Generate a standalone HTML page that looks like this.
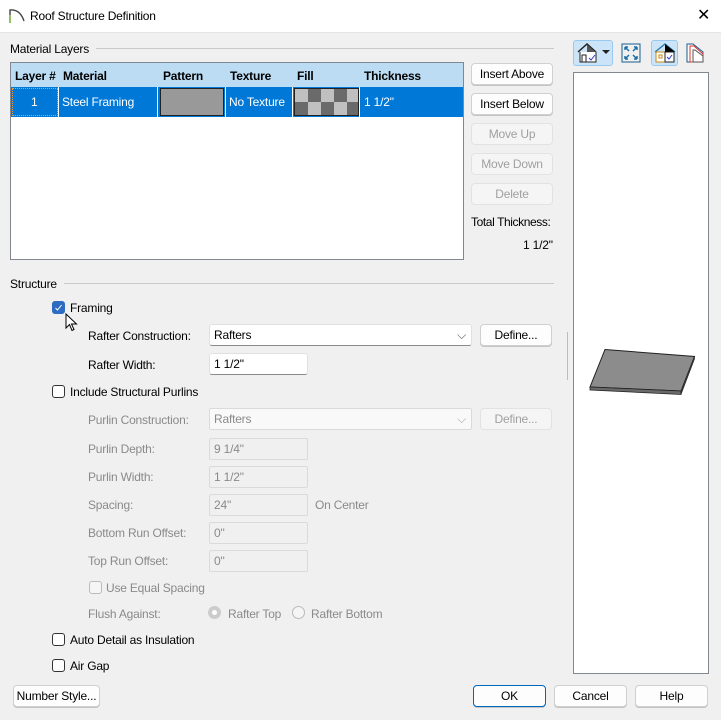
<!DOCTYPE html>
<html><head><meta charset="utf-8"><style>
*{box-sizing:border-box;margin:0;padding:0}
body{width:721px;height:720px;background:#f0f0f0;font-family:"Liberation Sans",sans-serif;font-size:12px;letter-spacing:-0.2px;color:#000;position:relative;overflow:hidden}
.a{position:absolute;white-space:nowrap}
.btn{position:absolute;background:#fdfdfd;border:1px solid #d0d0d0;border-radius:4px;text-align:center;line-height:20px;font-size:12px;box-shadow:0 1px 0 #c4c4c4}
.dis{background:#f5f5f5;color:#a0a0a0;box-shadow:none;border-color:#e2e2e2}
.inp{position:absolute;background:#fff;border:1px solid #e0e0e0;border-bottom:1px solid #8a8a8a;height:22px;line-height:20px;padding-left:4px;border-radius:3px}
.inpd{background:#f0f0f0;border:1px solid #dadada;color:#8a8a8a;border-radius:2px}
.cb{position:absolute;width:13px;height:13px;border:1px solid #333;border-radius:3px;background:#fff}
.g{color:#8a8a8a}
.hl{position:absolute;height:1px;background:#c8c8c8}
</style></head><body>
<div class="a" style="left:0;top:0;width:721px;height:32px;background:#fff"></div>
<svg class="a" style="left:8px;top:7px" width="18" height="18"><path d="M2 16V3 Q12 2 16 14" fill="none" stroke="#444" stroke-width="1.4"/><path d="M2 16V8" stroke="#8bc34a" stroke-width="1.5"/></svg>
<div class="a" style="left:30px;top:9px;font-size:12px">Roof Structure Definition</div>
<div class="a" style="left:697px;top:5px;font-size:16px">✕</div>
<div class="a" style="left:0;top:32px;width:721px;height:1px;background:#e5e5e5"></div>

<div class="a" style="left:10px;top:42px">Material Layers</div>
<div class="hl" style="left:96px;top:48px;width:458px"></div>
<div class="a" style="left:10px;top:62px;width:454px;height:198px;background:#fff;border:1px solid #828790"></div>
<div class="a" style="left:11px;top:63px;width:452px;height:24px;background:#bcdcf4"></div>
<div class="a" style="left:11px;top:87px;width:452px;height:30px;background:#0078d7"></div>
<div class="a" style="left:15px;top:69px;font-weight:bold">Layer #</div>
<div class="a" style="left:63px;top:69px;font-weight:bold">Material</div>
<div class="a" style="left:163px;top:69px;font-weight:bold">Pattern</div>
<div class="a" style="left:230px;top:69px;font-weight:bold">Texture</div>
<div class="a" style="left:297px;top:69px;font-weight:bold">Fill</div>
<div class="a" style="left:364px;top:69px;font-weight:bold">Thickness</div>
<div class="a" style="left:12px;top:88px;width:46px;height:28px;border:1px dotted #f0a040"></div>
<div class="a" style="left:58px;top:87px;width:1px;height:30px;background:#fff"></div>
<div class="a" style="left:157px;top:87px;width:1px;height:30px;background:#fff"></div>
<div class="a" style="left:225px;top:87px;width:1px;height:30px;background:#fff"></div>
<div class="a" style="left:292px;top:87px;width:1px;height:30px;background:#fff"></div>
<div class="a" style="left:359px;top:87px;width:1px;height:30px;background:#fff"></div>
<div class="a" style="left:31px;top:95px;color:#fff">1</div>
<div class="a" style="left:62px;top:95px;color:#fff">Steel Framing</div>
<div class="a" style="left:160px;top:88px;width:64px;height:28px;background:#999;border:1px solid #222"></div>
<div class="a" style="left:229px;top:95px;color:#fff">No Texture</div>
<svg class="a" style="left:294px;top:88px" width="65" height="28"><rect width="65" height="28" fill="#222"/><g transform="translate(1,1)">
<rect x="0" y="0" width="13" height="13" fill="#c0c0c0"/><rect x="13" y="0" width="13" height="13" fill="#6a6a6a"/><rect x="26" y="0" width="13" height="13" fill="#c0c0c0"/><rect x="39" y="0" width="13" height="13" fill="#6a6a6a"/><rect x="52" y="0" width="11" height="13" fill="#c0c0c0"/>
<rect x="0" y="13" width="13" height="13" fill="#6a6a6a"/><rect x="13" y="13" width="13" height="13" fill="#c0c0c0"/><rect x="26" y="13" width="13" height="13" fill="#6a6a6a"/><rect x="39" y="13" width="13" height="13" fill="#c0c0c0"/><rect x="52" y="13" width="11" height="13" fill="#6a6a6a"/></g></svg>
<div class="a" style="left:364px;top:95px;color:#fff">1 1/2"</div>

<div class="btn" style="left:471px;top:63px;width:82px;height:22px">Insert Above</div>
<div class="btn" style="left:471px;top:93px;width:82px;height:22px">Insert Below</div>
<div class="btn dis" style="left:471px;top:123px;width:82px;height:22px">Move Up</div>
<div class="btn dis" style="left:471px;top:153px;width:82px;height:22px">Move Down</div>
<div class="btn dis" style="left:471px;top:183px;width:82px;height:22px">Delete</div>
<div class="a" style="left:471px;top:215px;letter-spacing:-0.4px">Total Thickness:</div>
<div class="a" style="left:523px;top:238px">1 1/2"</div>

<div class="a" style="left:10px;top:277px">Structure</div>
<div class="hl" style="left:64px;top:283px;width:490px"></div>

<div class="cb" style="left:52px;top:301px;background:#2d6cc0;border-color:#2d6cc0"><svg width="11" height="11" style="position:absolute;left:0;top:0"><path d="M2.5 6l2 2 4-5" fill="none" stroke="#fff" stroke-width="1"/></svg></div>
<div class="a" style="left:70px;top:301px">Framing</div>
<svg class="a" style="left:65px;top:313px" width="14" height="20"><path d="M1 1v14l3.5-3.5 2.5 6 2-1-2.5-5.5h5z" fill="#fff" stroke="#000" stroke-width="1"/></svg>
<div class="a" style="left:88px;top:329px">Rafter Construction:</div>
<div class="inp" style="left:209px;top:324px;width:263px">Rafters<span style="position:absolute;right:5px;top:0;color:#555">⌵</span></div>
<div class="btn" style="left:480px;top:324px;width:72px;height:22px">Define...</div>
<div class="a" style="left:88px;top:358px">Rafter Width:</div>
<div class="inp" style="left:209px;top:353px;width:99px">1 1/2"</div>

<div class="cb" style="left:52px;top:385px"></div>
<div class="a" style="left:70px;top:385px">Include Structural Purlins</div>
<div class="a g" style="left:88px;top:413px">Purlin Construction:</div>
<div class="inp inpd" style="left:209px;top:408px;width:263px;background:#f9f9f9">Rafters<span style="position:absolute;right:5px;top:0;color:#aaa">⌵</span></div>
<div class="btn dis" style="left:480px;top:408px;width:72px;height:22px">Define...</div>
<div class="a g" style="left:88px;top:442px">Purlin Depth:</div>
<div class="inp inpd" style="left:209px;top:438px;width:99px">9 1/4"</div>
<div class="a g" style="left:88px;top:470px">Purlin Width:</div>
<div class="inp inpd" style="left:209px;top:466px;width:99px">1 1/2"</div>
<div class="a g" style="left:88px;top:498px">Spacing:</div>
<div class="inp inpd" style="left:209px;top:494px;width:99px">24"</div>
<div class="a g" style="left:315px;top:498px">On Center</div>
<div class="a g" style="left:88px;top:526px">Bottom Run Offset:</div>
<div class="inp inpd" style="left:209px;top:522px;width:99px">0"</div>
<div class="a g" style="left:88px;top:554px">Top Run Offset:</div>
<div class="inp inpd" style="left:209px;top:550px;width:99px">0"</div>
<div class="cb" style="left:89px;top:581px;border-color:#bbb;background:#f5f5f5"></div>
<div class="a g" style="left:106px;top:581px">Use Equal Spacing</div>
<div class="a g" style="left:88px;top:607px">Flush Against:</div>
<div class="a" style="left:208px;top:606px;width:13px;height:13px;border-radius:50%;background:#ccc"><div class="a" style="left:4px;top:4px;width:5px;height:5px;border-radius:50%;background:#fff"></div></div>
<div class="a g" style="left:228px;top:607px">Rafter Top</div>
<div class="a" style="left:292px;top:606px;width:13px;height:13px;border-radius:50%;border:1px solid #bbb;background:#f5f5f5"></div>
<div class="a g" style="left:311px;top:607px">Rafter Bottom</div>

<div class="cb" style="left:52px;top:633px"></div>
<div class="a" style="left:70px;top:633px">Auto Detail as Insulation</div>
<div class="cb" style="left:52px;top:659px"></div>
<div class="a" style="left:70px;top:659px">Air Gap</div>

<div class="btn" style="left:13px;top:685px;width:87px;height:22px">Number Style...</div>
<div class="btn" style="left:473px;top:685px;width:73px;height:22px;border:1px solid #0067c0">OK</div>
<div class="btn" style="left:554px;top:685px;width:73px;height:22px">Cancel</div>
<div class="btn" style="left:635px;top:685px;width:73px;height:22px">Help</div>

<!-- right preview -->
<div class="a" style="left:573px;top:40px;width:40px;height:26px;background:#cce4f7;border:1px solid #99c9ef;border-radius:3px"></div>
<svg class="a" style="left:576px;top:42px" width="24" height="22"><path d="M2 10L11 2 20 10" fill="none" stroke="#222" stroke-width="1.5"/><path d="M11 3L20 10H11z" fill="#555"/><path d="M4 10v10h16V10" fill="#fff" stroke="#222"/><rect x="6" y="13" width="4" height="7" fill="none" stroke="#222"/><path d="M13 16l2 2 4-5" fill="none" stroke="#33c" stroke-width="1"/></svg>
<div class="a" style="left:602px;top:50px;width:0;height:0;border-left:4px solid transparent;border-right:4px solid transparent;border-top:4px solid #222"></div>
<svg class="a" style="left:621px;top:42px" width="20" height="22"><rect x="1" y="2" width="18" height="18" fill="none" stroke="#1a5e8a"/><path d="M4 5l4 4M4 5h3M4 5v3M16 5l-4 4M16 5h-3M16 5v3M4 17l4-4M4 17h3M4 17v-3M16 17l-4-4M16 17h-3M16 17v-3" stroke="#1a6fa8" stroke-width="1.5" fill="none"/></svg>
<div class="a" style="left:651px;top:40px;width:27px;height:26px;background:#cce4f7;border:1px solid #99c9ef;border-radius:3px"></div>
<svg class="a" style="left:653px;top:42px" width="24" height="22"><path d="M2 10L12 2 22 10" fill="none" stroke="#2a7aa8" stroke-width="1.3"/><path d="M12 2L22 10H12z" fill="#000"/><rect x="3" y="10" width="9" height="10" fill="#fff" stroke="#c88a10"/><rect x="6" y="13" width="3" height="3" fill="none" stroke="#c88a10"/><rect x="12" y="10" width="9" height="10" fill="#fff" stroke="#222"/><path d="M14 15l2 2 3-4" fill="none" stroke="#33c"/></svg>
<svg class="a" style="left:685px;top:42px" width="24" height="22"><path d="M2 2h6l10 8v10H2z" fill="#fff" stroke="#1a5e8a"/><path d="M5 4h4l9 8v8H5z" fill="#fff" stroke="#d33"/><path d="M8 8h2l8 6v6H8z" fill="#fff" stroke="#555"/></svg>
<div class="a" style="left:573px;top:72px;width:136px;height:602px;background:#fff;border:1px solid #828790"></div>
<div class="a" style="left:567px;top:332px;width:1px;height:48px;background:#bbb"></div>
<svg class="a" style="left:0;top:0" width="721" height="720" style="pointer-events:none"><path d="M605 349.5L694.5 356.5 681 391 590 387z" fill="#8c8c8c" stroke="#222" stroke-width="1"/><path d="M590 387L681 391 681 394.5 590 390z" fill="#6a6a6a" stroke="#222" stroke-width="0.8"/><path d="M681 391L694.5 356.5 694.5 359 681 394.5z" fill="#444" stroke="#222" stroke-width="0.6"/></svg>
</body></html>
